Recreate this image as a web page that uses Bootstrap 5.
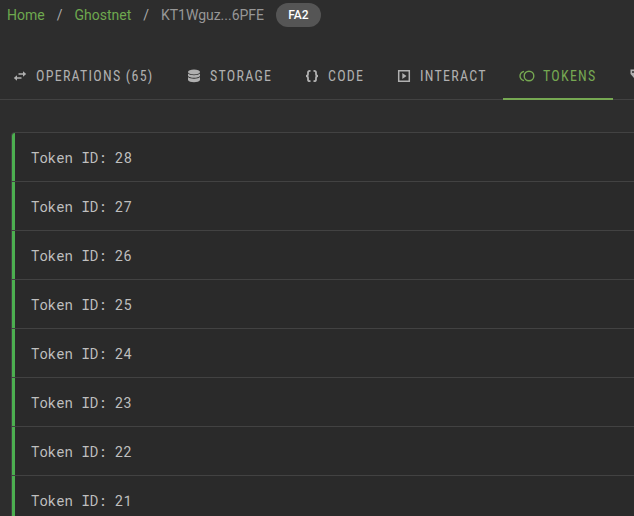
<!DOCTYPE html>
<html lang="en" data-bs-theme="dark">
<head>
<meta charset="utf-8">
<meta name="viewport" content="width=device-width, initial-scale=1">
<title>Contract tokens</title>
<link href="https://cdn.jsdelivr.net/npm/bootstrap@5.3.0/dist/css/bootstrap.min.css" rel="stylesheet">
<style>
body{background:#2d2d2d;font-family:Roboto,"Liberation Sans",sans-serif;color:#aaa;height:516px;overflow:hidden}
.crumbs{height:30px;padding-left:7px;font-size:14px;line-height:20px;--bs-breadcrumb-item-padding-x:12px;--bs-breadcrumb-divider-color:#aaa}
.crumbs a{color:#6ea84f}
.crumbs .current{color:#979797;letter-spacing:-.02px}
.chip{width:45px;height:24px;margin-left:12px;background:#555;color:#fff;font-size:12px;font-weight:500}
.tabbar{height:48px;margin-top:22px;border-bottom:1px solid #424242}
.tabbar .nav-link{height:48px;border-radius:0;padding:0 0 0 16px;color:#b0b0b0;font:400 14px/20px "Roboto Condensed",Roboto,sans-serif;font-stretch:75%;letter-spacing:1.25px;white-space:nowrap}
.tabbar .nav-link.active{color:#76a852;border-bottom:2px solid #76a852;padding-top:2px}
.tabbar svg{width:16px;height:16px;margin-right:8px;flex:none}
.t-ops{width:174px;margin-left:-4px}.t-storage{width:118px}.t-code{width:92px}.t-interact{width:123px}.t-tokens{width:110px}
.tokens{margin:32px 0 0 11px;border:1px solid #424242;border-right:0;border-radius:4px 0 0 0;background:#2a2a2a;overflow:hidden}
.token{height:49px;padding-left:16px;border-left:3px solid #4caf50;font:14px/20px "Roboto Mono","Liberation Mono",monospace;color:#bfbfbf;position:relative}
.token+.token::before{content:"";position:absolute;left:-3px;right:0;top:-1px;border-top:1px solid #424242}
</style>
<script src="https://cdn.jsdelivr.net/npm/bootstrap@5.3.0/dist/js/bootstrap.bundle.min.js"></script>
</head>
<body>
<nav aria-label="breadcrumb">
<ol class="breadcrumb crumbs mb-0 align-items-center flex-nowrap">
<li class="breadcrumb-item"><a class="text-decoration-none" href="#">Home</a></li>
<li class="breadcrumb-item"><a class="text-decoration-none" href="#">Ghostnet</a></li>
<li class="breadcrumb-item current">KT1Wguz...6PFE</li>
<li class="chip rounded-pill d-flex align-items-center justify-content-center">FA2</li>
</ol>
</nav>
<ul class="nav flex-nowrap tabbar">
<li class="t-ops flex-shrink-0"><a class="nav-link d-flex align-items-center" href="#"><svg viewBox="0 0 16 16" fill="currentColor"><path d="M11 3.300 14.200 6 11 8.700V6.700H6.500V5.300H11zM5 7.300 1.800 10 5 12.700V10.700H9.500V9.300H5z"/></svg><span>OPERATIONS (65)</span></a></li>
<li class="t-storage flex-shrink-0"><a class="nav-link d-flex align-items-center" href="#"><svg viewBox="0 0 16 16" fill="currentColor"><ellipse cx="8" cy="4" rx="6" ry="2.500"/><path d="M2 5.500c2 2.200 10 2.200 12 0v2.300c-1 2.700-11 2.700-12 0zM2 9c2 2.200 10 2.200 12 0v3c-1 2.900-11 2.900-12 0z"/></svg><span>STORAGE</span></a></li>
<li class="t-code flex-shrink-0"><a class="nav-link d-flex align-items-center" href="#"><svg viewBox="0 0 16 16" fill="none" stroke="currentColor" stroke-width="1.800"><path d="M6.500 2.800H5.800Q4 2.800 4 4.500V6Q4 8 2 8Q4 8 4 10V11.500Q4 13.200 5.800 13.200H6.500M9.500 2.800H10.200Q12 2.800 12 4.500V6Q12 8 14 8Q12 8 12 10V11.500Q12 13.200 10.200 13.200H9.500"/></svg><span>CODE</span></a></li>
<li class="t-interact flex-shrink-0"><a class="nav-link d-flex align-items-center" href="#"><svg viewBox="0 0 16 16"><path d="M2.700 2.700H13.300V13.300H2.700z" fill="none" stroke="currentColor" stroke-width="1.500"/><path d="M6.300 5v6L10.500 8z" fill="currentColor"/></svg><span>INTERACT</span></a></li>
<li class="t-tokens flex-shrink-0"><a class="nav-link active d-flex align-items-center" href="#"><svg viewBox="0 0 16 16" fill="none" stroke="currentColor" stroke-width="1.400"><circle cx="10" cy="8" r="4.800"/><path d="M5 3.300C-.3 4.900-.3 11.100 5 12.700"/></svg><span>TOKENS</span></a></li>
<li class="flex-shrink-0"><a class="nav-link d-flex align-items-center" href="#" aria-label="Metadata"><svg viewBox="0 0 16 16"><path d="M1.500 1.500H7L14.500 9 9 14.500 1.500 6z" fill="#b0b0b0"/><circle cx="4" cy="4" r="1" fill="#2d2d2d"/></svg></a></li>
</ul>
<div class="tokens">
<div class="token d-flex align-items-center">Token ID: 28</div>
<div class="token d-flex align-items-center">Token ID: 27</div>
<div class="token d-flex align-items-center">Token ID: 26</div>
<div class="token d-flex align-items-center">Token ID: 25</div>
<div class="token d-flex align-items-center">Token ID: 24</div>
<div class="token d-flex align-items-center">Token ID: 23</div>
<div class="token d-flex align-items-center">Token ID: 22</div>
<div class="token d-flex align-items-center">Token ID: 21</div>
</div>
</body>
</html>
